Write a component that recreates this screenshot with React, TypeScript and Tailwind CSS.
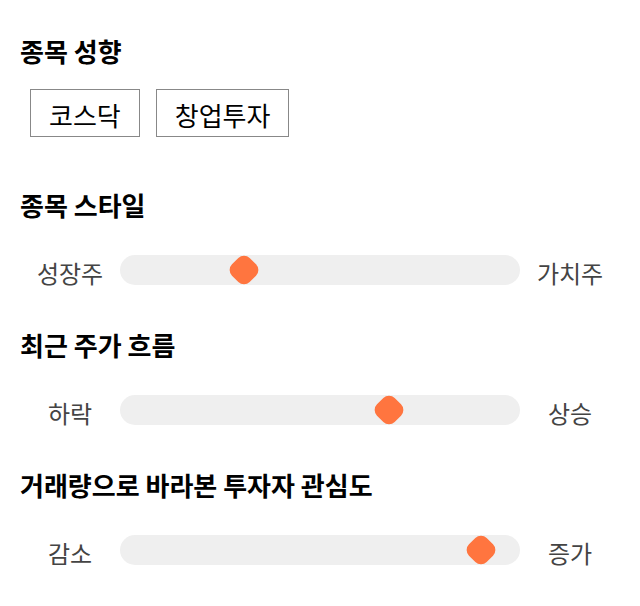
const font = "font-['Noto_Sans_CJK_KR','Noto_Sans',sans-serif]";

interface SliderRowProps {
  left: string;
  right: string;
  // thumb centre, px from the track's left edge
  pos: number;
}

function SliderRow({ left, right, pos }: SliderRowProps) {
  return (
    <div className="flex h-[30px] items-center">
      <span className="w-[100px] shrink-0 pt-[5px] text-center text-[24px] leading-none text-[#444]">
        {left}
      </span>
      <div className="relative h-[30px] w-[400px] shrink-0 rounded-full bg-[#efefef]">
        <div
          className="absolute top-1/2 h-[25px] w-[25px] -translate-x-1/2 -translate-y-1/2 rotate-45 rounded-[8px] bg-[#ff753f]"
          style={{ left: `${pos}px` }}
        />
      </div>
      <span className="w-[100px] shrink-0 pt-[5px] text-center text-[24px] leading-none text-[#444]">
        {right}
      </span>
    </div>
  );
}

function Heading({ children }: { children: string }) {
  return (
    <h2 className="flex h-[36px] items-center text-[26px] font-bold leading-none text-black">
      {children}
    </h2>
  );
}

export default function App() {
  return (
    <div className={`${font} min-h-[606px] w-[640px] bg-white px-5 pt-[33px]`}>
      <section>
        <Heading>종목 성향</Heading>
        <div className="ml-[10px] mt-[20px] flex gap-4">
          <span className="flex h-[48px] items-center border border-[#888] px-[18px] pt-[3px] text-[26px] leading-none text-black">
            코스닥
          </span>
          <span className="flex h-[48px] items-center border border-[#888] px-[18px] pt-[3px] text-[26px] leading-none text-black">
            창업투자
          </span>
        </div>
      </section>

      <section className="mt-[50px]">
        <Heading>종목 스타일</Heading>
        <div className="mt-[32px]">
          <SliderRow left="성장주" right="가치주" pos={124} />
        </div>
      </section>

      <section className="mt-[42px]">
        <Heading>최근 주가 흐름</Heading>
        <div className="mt-[32px]">
          <SliderRow left="하락" right="상승" pos={269} />
        </div>
      </section>

      <section className="mt-[42px]">
        <Heading>거래량으로 바라본 투자자 관심도</Heading>
        <div className="mt-[32px]">
          <SliderRow left="감소" right="증가" pos={361} />
        </div>
      </section>
    </div>
  );
}
